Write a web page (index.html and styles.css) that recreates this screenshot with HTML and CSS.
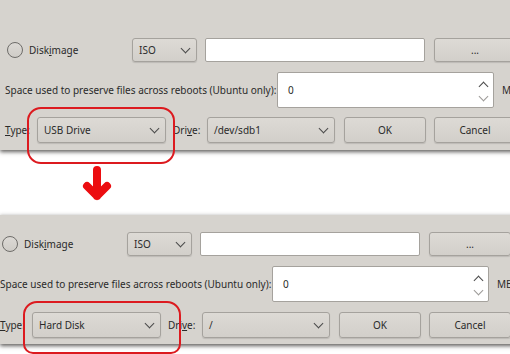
FILE: index.html
```html
<!DOCTYPE html>
<html lang="en">
<head>
    <meta charset="UTF-8">
    <title>Type: USB Drive vs Hard Disk</title>
    <link rel="stylesheet" href="styles.css">
</head>
<body>
    <div class="page">
        <div class="dialog dialog-top">
            <div class="row row-image">
                <div class="cell-radio">
                    <span class="radio"></span>
                    <span class="label">Disk<u>i</u>mage</span>
                </div>
                <div class="combo combo-iso"><span>ISO</span><i class="chev"></i></div>
                <div class="field field-path"></div>
                <div class="button">...</div>
            </div>
            <div class="row row-space">
                <div class="cell-space">Space used to preserve files across reboots (Ubuntu only):</div>
                <div class="field spin">
                    <span>0</span>
                    <span class="spin-arrows"><i class="chev chev-up"></i><i class="chev chev-off"></i></span>
                </div>
                <div class="unit">MB</div>
            </div>
            <div class="row row-type">
                <div class="cell-type"><u>T</u>ype:</div>
                <div class="combo combo-type"><span>USB Drive</span><i class="chev"></i></div>
                <div class="cell-drive">Dri<u>v</u>e:</div>
                <div class="combo combo-drive"><span>/dev/sdb1</span><i class="chev"></i></div>
                <div class="button button-ok">OK</div>
                <div class="button">Cancel</div>
            </div>
        </div>

        <div class="between">
            <svg class="arrow" width="32" height="38" viewBox="0 0 32 38">
                <path d="M15 5 V31 M5 21 L15 31 L25 21" fill="none" stroke="#ec0d10" stroke-width="8" stroke-linecap="round" stroke-linejoin="round"/>
            </svg>
        </div>

        <div class="dialog dialog-bottom">
            <div class="row row-image">
                <div class="cell-radio">
                    <span class="radio"></span>
                    <span class="label">Disk<u>i</u>mage</span>
                </div>
                <div class="combo combo-iso"><span>ISO</span><i class="chev"></i></div>
                <div class="field field-path"></div>
                <div class="button">...</div>
            </div>
            <div class="row row-space">
                <div class="cell-space">Space used to preserve files across reboots (Ubuntu only):</div>
                <div class="field spin">
                    <span>0</span>
                    <span class="spin-arrows"><i class="chev chev-up"></i><i class="chev chev-off"></i></span>
                </div>
                <div class="unit">MB</div>
            </div>
            <div class="row row-type">
                <div class="cell-type"><u>T</u>ype:</div>
                <div class="combo combo-type"><span>Hard Disk</span><i class="chev"></i></div>
                <div class="cell-drive">Dri<u>v</u>e:</div>
                <div class="combo combo-drive"><span>/</span><i class="chev"></i></div>
                <div class="button button-ok">OK</div>
                <div class="button">Cancel</div>
            </div>
        </div>

        <div class="mark mark-top"></div>
        <div class="mark mark-bottom"></div>
    </div>
</body>
</html>
```

FILE: styles.css
```css
body {
    margin: 0;
    background: #fff;
    font-family: "Noto Sans", "DejaVu Sans", sans-serif;
    font-size: 10px;
    color: #2a2a2a;
}
.page {
    position: relative;
    width: 510px;
    height: 354px;
    overflow: hidden;
}
.dialog {
    background: #d6d3ce;
    width: 530px;
}
.dialog-top {
    padding: 38px 0 7px 5px;
    box-shadow: 0 2px 4px rgba(60, 58, 55, 0.8);
}
.dialog-bottom {
    padding: 17px 0 6px 0;
    box-shadow: 0 2px 4px rgba(60, 58, 55, 0.8), 0 -1px 3px rgba(0, 0, 0, 0.08);
}
.between {
    height: 65px;
    padding-left: 82px;
    box-sizing: border-box;
    padding-top: 15px;
}
.arrow {
    display: block;
}
.row {
    display: flex;
    align-items: center;
    white-space: nowrap;
}
.row > * {
    flex-shrink: 0;
}
.row-image {
    height: 24px;
}
.row-space {
    height: 36px;
    margin-top: 10px;
}
.row-type {
    height: 26px;
    margin-top: 9px;
}
.dialog-bottom .row-type {
    margin-top: 10px;
}
.cell-radio {
    width: 127px;
    display: flex;
    align-items: center;
}
.radio {
    width: 14px;
    height: 14px;
    margin-left: 2px;
    border: 1px solid #6e6c69;
    border-radius: 50%;
    background: linear-gradient(#dcd9d5, #cfccc7);
}
.label {
    margin-left: 6px;
}
.combo, .button, .field {
    box-sizing: border-box;
    height: 24px;
    border: 1px solid #a5a29d;
    border-radius: 3px;
}
.combo, .button {
    background: linear-gradient(#dddad5, #d2cfca);
    box-shadow: 0 1px 1px rgba(0, 0, 0, 0.12);
}
.combo {
    display: flex;
    align-items: center;
    justify-content: space-between;
    padding: 0 6px;
}
.button {
    width: 82px;
    display: flex;
    align-items: center;
    justify-content: center;
}
.row-type .combo, .row-type .button {
    height: 26px;
}
.field {
    background: #fff;
    border-radius: 2px;
}
.combo-iso {
    width: 65px;
}
.field-path {
    width: 220px;
    margin: 0 9px 0 8px;
}
.chev {
    width: 6px;
    height: 6px;
    border-right: 1.3px solid #4a4a4a;
    border-bottom: 1.3px solid #4a4a4a;
    transform: rotate(45deg);
    margin: -4px 1px 0 0;
}
.cell-space {
    width: 272px;
}
.spin {
    width: 217px;
    height: 36px;
    display: flex;
    align-items: center;
    justify-content: space-between;
    padding: 0 6px 0 10px;
}
.spin-arrows {
    display: flex;
    flex-direction: column;
    align-items: center;
    gap: 3px;
}
.chev-up {
    transform: rotate(-135deg);
    margin: 3px 0 0;
}
.chev-off {
    border-color: #9c9a97;
    margin: 0;
}
.unit {
    margin-left: 8px;
}
.cell-type {
    width: 32px;
}
.combo-type {
    width: 129px;
}
.cell-drive {
    width: 41px;
    padding-left: 7px;
    box-sizing: border-box;
}
.combo-drive {
    width: 128px;
    justify-content: space-between;
}
.button-ok {
    margin: 0 8px 0 9px;
}
.mark {
    position: absolute;
    border: 2px solid #dc1a1f;
    border-radius: 14px;
    box-sizing: border-box;
}
.mark-top {
    left: 27px;
    top: 107px;
    width: 148px;
    height: 57px;
}
.mark-bottom {
    left: 23px;
    top: 301px;
    width: 158px;
    height: 53px;
    border-radius: 14px 14px 10px 10px;
}
```
